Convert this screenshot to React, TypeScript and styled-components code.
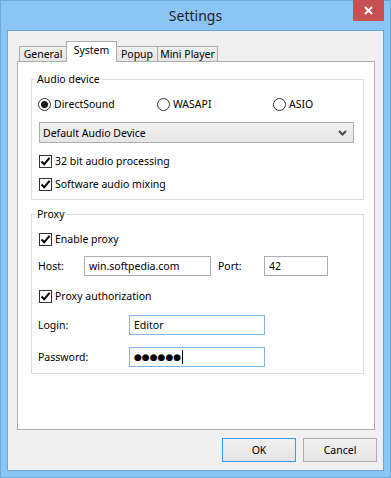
import React from 'react';
import styled, { createGlobalStyle } from 'styled-components';

const GlobalStyle = createGlobalStyle`
  html, body {
    margin: 0;
    padding: 0;
    background: #8bc5f6;
  }
  body {
    font-family: "Noto Sans", "Open Sans", sans-serif;
    font-size: 10.5px;
    color: #000;
  }
  * {
    box-sizing: border-box;
  }
`;

const Window = styled.div`
  position: relative;
  width: 391px;
  height: 478px;
  display: flex;
  flex-direction: column;
  background: #8bc5f6;
  border: 1px solid #70a8dc;
`;

const TitleBar = styled.div`
  flex: none;
  height: 29px;
  display: flex;
  align-items: center;
  justify-content: center;
  padding-bottom: 1px;
  font-size: 14px;
  color: #1e1e1e;
`;

const CloseButton = styled.div`
  position: absolute;
  top: -1px;
  right: 6px;
  width: 31px;
  height: 21px;
  background: #c75050;
  display: flex;
  align-items: center;
  justify-content: center;
`;

const Client = styled.div`
  flex: 1;
  margin: 0 6px 6px 6px;
  border: 1px solid #6ea5d9;
  background: #f0f0f0;
  padding: 10px 0 8px 0;
  display: flex;
  flex-direction: column;
`;

const TabRow = styled.div`
  height: 20px;
  margin-left: 11px;
  display: flex;
  align-items: flex-end;
`;

const Tab = styled.div<{ $active?: boolean; $w: number }>`
  position: relative;
  z-index: ${(p) => (p.$active ? 1 : 0)};
  width: ${(p) => p.$w}px;
  height: ${(p) => (p.$active ? 21 : 15)}px;
  margin-left: -1px;
  margin-bottom: ${(p) => (p.$active ? -1 : 0)}px;
  padding-bottom: ${(p) => (p.$active ? 4 : 0)}px;
  border: 1px solid #acacac;
  border-bottom: none;
  background: ${(p) => (p.$active ? '#fff' : 'linear-gradient(#f0f0f0, #e5e5e5)')};
  display: flex;
  align-items: center;
  justify-content: center;
  white-space: nowrap;
  &:first-child {
    margin-left: 0;
  }
`;

const Panel = styled.div`
  height: 369px;
  margin: 0 8px 0 9px;
  background: #fff;
  border: 1px solid #adadad;
  padding: 0 10px 0 13px;
  display: flex;
  flex-direction: column;
`;

const GroupBox = styled.fieldset<{ $mt: number; $pb: number }>`
  margin: ${(p) => p.$mt}px 0 0 0;
  padding: 0 9px ${(p) => p.$pb}px 6px;
  border: 1px solid #dcdcdc;
  min-width: 0;
  display: flex;
  flex-direction: column;
`;

const Legend = styled.legend`
  margin-left: -3px;
  padding: 0 2px;
  line-height: 16px;
`;

const Row = styled.div<{ $mt: number; $h?: number }>`
  margin-top: ${(p) => p.$mt}px;
  height: ${(p) => p.$h ?? 16}px;
  display: flex;
  align-items: center;
`;

const RadioGrid = styled.div`
  margin-top: 9px;
  height: 16px;
  display: grid;
  grid-template-columns: 119px 116px auto;
  align-items: center;
`;

const Choice = styled.label`
  display: flex;
  align-items: center;
  gap: 3px;
  white-space: nowrap;
`;

const RadioCircle = styled.span<{ $on?: boolean }>`
  width: 13px;
  height: 13px;
  border-radius: 50%;
  border: 1px solid #333;
  background: #fff;
  display: flex;
  align-items: center;
  justify-content: center;
  &::after {
    content: '';
    width: 7px;
    height: 7px;
    border-radius: 50%;
    background: ${(p) => (p.$on ? '#1a1a1a' : 'transparent')};
  }
`;

const CheckBox = styled.span`
  margin-left: 1px;
  width: 13px;
  height: 13px;
  border: 1px solid #333;
  background: #fff;
  display: flex;
  align-items: center;
  justify-content: center;
`;

const Combo = styled.div`
  margin: 10px 0 0 1px;
  width: 315px;
  height: 21px;
  border: 1px solid #acacac;
  background: linear-gradient(#f2f2f2, #e5e5e5);
  padding: 0 6px 0 3px;
  display: flex;
  align-items: center;
  justify-content: space-between;
`;

const FieldLabel = styled.span<{ $w: number }>`
  width: ${(p) => p.$w}px;
  flex: none;
`;

const TextField = styled.div<{ $w: number; $blue?: boolean }>`
  width: ${(p) => p.$w}px;
  height: 20px;
  flex: none;
  border: 1px solid ${(p) => (p.$blue ? '#7eb4ea' : '#abadb3')};
  background: #fff;
  padding-left: 4px;
  display: flex;
  align-items: center;
`;

const Spacer = styled.span`
  width: 7px;
  flex: none;
`;

const Dots = styled.span`
  font-family: "DejaVu Sans", sans-serif;
  font-size: 9px;
  letter-spacing: 0;
`;

const Caret = styled.span`
  margin-left: 1px;
  width: 1px;
  height: 14px;
  background: #000;
`;

const ButtonRow = styled.div`
  margin-top: 8px;
  padding-right: 6px;
  display: flex;
  justify-content: flex-end;
  gap: 7px;
`;

const Button = styled.div<{ $default?: boolean }>`
  width: 74px;
  height: 24px;
  border: 1px solid ${(p) => (p.$default ? '#3399ff' : '#acacac')};
  background: linear-gradient(#f0f0f0, #e5e5e5);
  display: flex;
  align-items: center;
  justify-content: center;
`;

const Check = () => (
  <CheckBox>
    <svg width="11" height="11" viewBox="0 0 11 11">
      <path d="M1.5 5.5 L4.2 8.3 L9.5 1.8" fill="none" stroke="#000" strokeWidth="2" />
    </svg>
  </CheckBox>
);

const App = () => {
  return (
    <>
      <GlobalStyle />
      <Window>
        <TitleBar>Settings</TitleBar>
        <CloseButton>
          <svg width="9" height="9" viewBox="0 0 9 9">
            <path d="M1 1 L8 8 M8 1 L1 8" stroke="#fff" strokeWidth="2" />
          </svg>
        </CloseButton>
        <Client>
          <TabRow>
            <Tab $w={48}>General</Tab>
            <Tab $w={51} $active>
              System
            </Tab>
            <Tab $w={42}>Popup</Tab>
            <Tab $w={61}>Mini Player</Tab>
          </TabRow>
          <Panel>
            <GroupBox $mt={9} $pb={7}>
              <Legend>Audio device</Legend>
              <RadioGrid>
                <Choice>
                  <RadioCircle $on />
                  DirectSound
                </Choice>
                <Choice>
                  <RadioCircle />
                  WASAPI
                </Choice>
                <Choice>
                  <RadioCircle />
                  ASIO
                </Choice>
              </RadioGrid>
              <Combo>
                <span>Default Audio Device</span>
                <svg width="9" height="6" viewBox="0 0 9 6">
                  <path d="M1 1 L4.5 4.5 L8 1" fill="none" stroke="#4a4a4a" strokeWidth="2" />
                </svg>
              </Combo>
              <Row $mt={10}>
                <Choice>
                  <Check />
                  32 bit audio processing
                </Choice>
              </Row>
              <Row $mt={7}>
                <Choice>
                  <Check />
                  Software audio mixing
                </Choice>
              </Row>
            </GroupBox>
            <GroupBox $mt={6} $pb={6}>
              <Legend>Proxy</Legend>
              <Row $mt={9}>
                <Choice>
                  <Check />
                  Enable proxy
                </Choice>
              </Row>
              <Row $mt={9} $h={20}>
                <FieldLabel $w={46}>Host:</FieldLabel>
                <TextField $w={127}>win.softpedia.com</TextField>
                <Spacer />
                <FieldLabel $w={46}>Port:</FieldLabel>
                <TextField $w={64}>42</TextField>
              </Row>
              <Row $mt={12}>
                <Choice>
                  <Check />
                  Proxy authorization
                </Choice>
              </Row>
              <Row $mt={11} $h={20}>
                <FieldLabel $w={91}>Login:</FieldLabel>
                <TextField $w={136} $blue>
                  Editor
                </TextField>
              </Row>
              <Row $mt={12} $h={20}>
                <FieldLabel $w={91}>Password:</FieldLabel>
                <TextField $w={136} $blue>
                  <Dots>●●●●●●</Dots>
                  <Caret />
                </TextField>
              </Row>
            </GroupBox>
          </Panel>
          <ButtonRow>
            <Button $default>OK</Button>
            <Button>Cancel</Button>
          </ButtonRow>
        </Client>
      </Window>
    </>
  );
};

export default App;
